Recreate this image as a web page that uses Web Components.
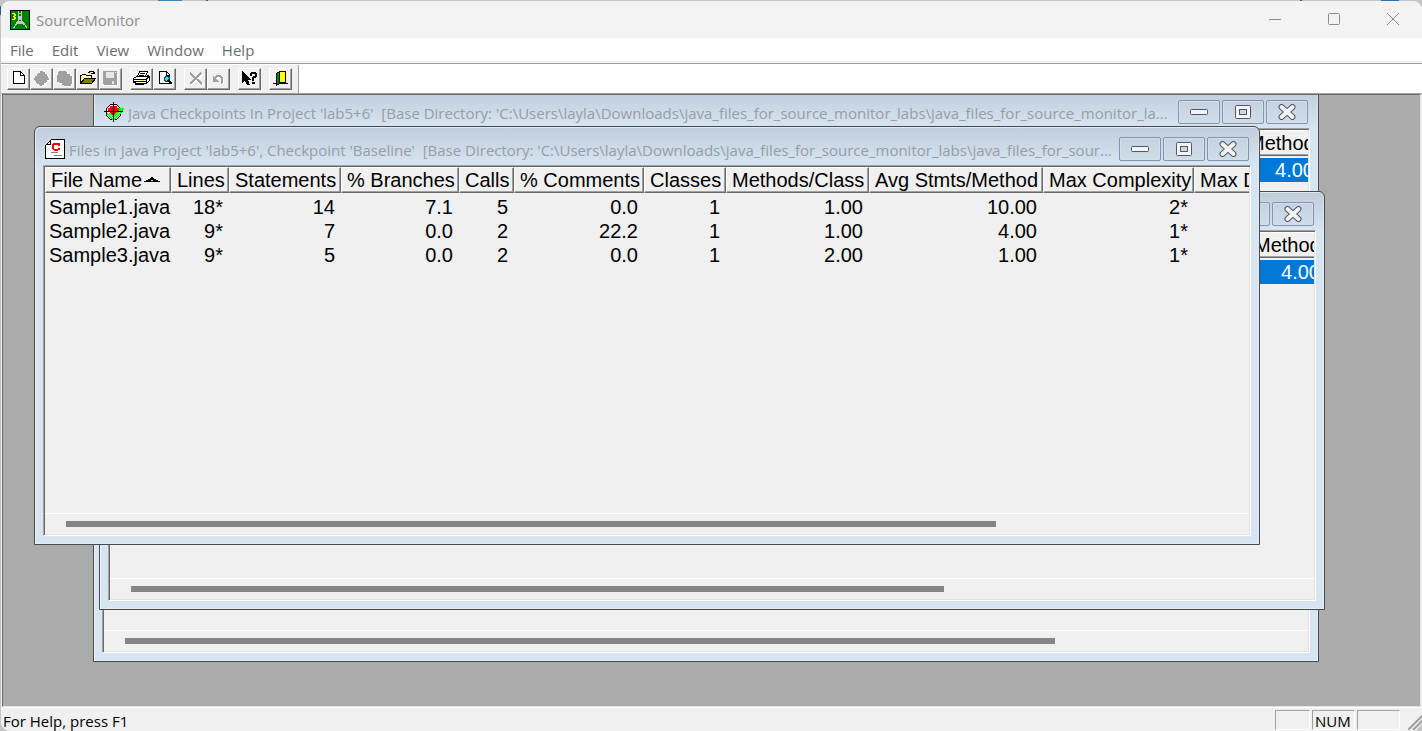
<!DOCTYPE html>
<html lang="en">
<head>
<meta charset="utf-8">
<title>SourceMonitor</title>
<style>
  body { margin: 0; font: 15px/20px "Open Sans", sans-serif; background: #c4c4c4; overflow: hidden; }
</style>
</head>
<body>
<sm-app>
  <sm-titlebar slot="title">SourceMonitor</sm-titlebar>
  <sm-menubar slot="menu"></sm-menubar>
  <sm-toolbar slot="tools"></sm-toolbar>
  <mdi-window class="project" icon="target" label="Java Checkpoints In Project 'lab5+6'&nbsp; [Base Directory: 'C:\Users\layla\Downloads\java_files_for_source_monitor_labs\java_files_for_source_monitor_la...">
    <metrics-table kind="summary"></metrics-table>
  </mdi-window>
  <mdi-window class="checkpoint" label="">
    <metrics-table kind="summary"></metrics-table>
  </mdi-window>
  <mdi-window class="files" icon="file" label="Files in Java Project 'lab5+6', Checkpoint 'Baseline'&nbsp; [Base Directory: 'C:\Users\layla\Downloads\java_files_for_source_monitor_labs\java_files_for_sour...">
    <metrics-table kind="files"></metrics-table>
  </mdi-window>
  <sm-statusbar slot="status">For Help, press F1</sm-statusbar>
</sm-app>

<script>
const shadow = (host, html) => { host.attachShadow({ mode: 'open' }).innerHTML = html; };

customElements.define('sm-app', class extends HTMLElement {
  constructor() {
    super();
    shadow(this, `
    <style>
      :host { display: block; height: 100vh; box-sizing: border-box; padding: 1px 0 0 1px;
        background:
          linear-gradient(#2f5d8f,#2f5d8f) 0 6px / 1px 9px no-repeat,
          linear-gradient(90deg,#0000 0 158px,#3f86b8 158px 182px,#0000 182px 206px,#555 206px 208px,#0000 208px 1300px,#555 1300px 1302px,#0000 1302px 1381px,#2f6ea5 1381px 1399px,#0000 1399px) 0 0 / 100% 1px no-repeat,
          #c4c4c4; }
      .app { height: 100%; display: flex; flex-direction: column; border-radius: 9px; overflow: hidden; background: #f0f0f0; }
      main { flex: 1; position: relative; overflow: hidden; margin: 0 1px; background: #ababab;
        border-top: 1px solid #696969; border-left: 1px solid #696969; border-right: 1px solid #e3e3e3; border-bottom: 1px solid #e3e3e3; }
      ::slotted(mdi-window) { position: absolute; }
      ::slotted(.project) { left: 90px; top: -6px; width: 1226px; height: 573px; }
      ::slotted(.checkpoint) { left: 96px; top: 96px; width: 1226px; height: 419px; }
      ::slotted(.files) { left: 31px; top: 31px; width: 1226px; height: 419px; }
    </style>
    <div class="app">
      <slot name="title"></slot><slot name="menu"></slot><slot name="tools"></slot>
      <main><slot></slot></main>
      <slot name="status"></slot>
    </div>`);
  }
});

customElements.define('sm-titlebar', class extends HTMLElement {
  constructor() {
    super();
    shadow(this, `
    <style>
      :host { display: flex; align-items: center; height: 37px; background: #f3f3f3; color: #8f8f8f; padding-left: 9px; }
      .logo { margin-right: 6px; }
      span { flex: 1; }
      button { width: 59px; height: 37px; border: 0; padding: 0; background: none; display: grid; place-items: center; }
      button svg { margin-bottom: 2px; }
    </style>
    <svg class="logo" width="20" height="20" viewBox="0 0 20 20" shape-rendering="crispEdges">
      <rect width="20" height="20" rx="1" fill="#000"/><rect x="1" y="1" width="18" height="18" fill="#008000"/>
      <path d="M8.500 1v5M11.500 1v5M8 3.500h4M8 9.500h4M6 13.500h9" stroke="#c0c0c0" fill="none"/>
      <path d="M9 5 L8 11 L3.500 18.500M11 5 L12 11 L17.500 18.500M9 6 L12 10M11 6L8 10M8 11l7 4M12 11l-7 4" stroke="#c8c8c8" fill="none"/>
      <path d="M2 3h3v1h1v2H5v1h1v2H5v1H2V9h2V7H3V6h1V4H2z" fill="#ff0"/>
    </svg>
    <span><slot></slot></span>
    <button aria-label="Minimize"><svg width="12" height="12"><path d="M0 6.500h12" stroke="#8a8a8a"/></svg></button>
    <button aria-label="Maximize"><svg width="12" height="12"><rect x=".5" y=".5" width="11" height="11" rx="1" fill="none" stroke="#8a8a8a"/></svg></button>
    <button aria-label="Close"><svg width="12" height="12"><path d="M0 0l12 12M12 0L0 12" stroke="#8a8a8a"/></svg></button>`);
  }
});

customElements.define('sm-menubar', class extends HTMLElement {
  constructor() {
    super();
    shadow(this, `
    <style>
      :host { display: block; background: #fff; border-bottom: 2px solid #f0f0f0; }
      nav { display: flex; height: 23px; }
      button { font: inherit; color: #6d6d6d; border: 0; background: none; padding: 0 9px; }
    </style>
    <nav>${['File', 'Edit', 'View', 'Window', 'Help'].map(t => `<button>${t}</button>`).join('')}</nav>`);
  }
});

const blobA = 'M9 2h3v1h2v2h2v2h1v2h1v2h-2v2h-1v1h-2v2h-2v1h-2v-1H8v-1H6v-1H5v-2H4v-1H3V9h1V7h2V5h1V4h2z';
const blobB = 'M5 2h7v1h1v2h3v2h2v8h-1v2h-7v-1H8v-2H5v-1H3V6h1V3h1z';
const icons = {
  'New': '<path d="M5.500 2.500h7l4 4v8h-11z" fill="#fff" stroke="#000"/><path d="M12.500 3v3.500H16" fill="none" stroke="#000"/>',
  'Checkpoint': `<path d="${blobA}" fill="#fff" transform="translate(1 1)"/><path d="${blobA}" fill="#a0a0a0"/>`,
  'Checkpoints': `<path d="${blobB}" fill="#fff" transform="translate(1 1)"/><path d="${blobB}" fill="#a0a0a0"/>`,
  'Open': '<path d="M3.500 14V6.500h1l1-1h3l1 1h5v3" fill="#ffff9c" stroke="#000"/><path d="M3.500 14.500l4-5h11l-4 5z" fill="#808000" stroke="#000"/><path d="M11 3.500h1l1-1h3l1 1v1M14 4.500h4" stroke="#000" fill="none"/>',
  'Save': '<path d="M4 3h14v14H5z" fill="#fff"/><path d="M3 2h14v14H4l-1-1z" fill="#a0a0a0"/><path d="M6 3h8v6H6zM12 12h2v3h-2z" fill="#e8e8e8"/><path d="M15 3h1v1h-1z" fill="#fff"/>',
  'Print': '<path d="M6.500 7.500l2-5h8l-2 5" fill="#fff" stroke="#000"/><path d="M9 4.500h5M8 6.500h5" stroke="#000"/><path d="M2.500 9.500l3-2h10l2-1 1 1v4l-3 3h-3v1h-8v-2h-2z" fill="#fff" stroke="#000"/><path d="M3 10.500h12M3 12.500h12M15.500 9v5M16 9.500l2-2M5 14.500h8" stroke="#000"/><path d="M10 11h3v1h-3z" fill="#ff0"/>',
  'Print preview': '<path d="M5.500 2.500h7l3 3v9h-10z" fill="#fff" stroke="#000"/><path d="M12.500 3v3H16" fill="none" stroke="#000"/><path d="M11 7h3v1h1v3h-1v1h-3v-1h-1V8h1z" fill="#0ff" stroke="#246"/><path d="M14 11l4 4" stroke="#000" stroke-width="2"/>',
  'Delete': '<path d="M6 5l12 11M18 5L6 16" stroke="#fff" stroke-width="2"/><path d="M5 4l12 11M16 4L5 15" stroke="#a0a0a0" stroke-width="2"/>',
  'Undo': '<path d="M8 10a4 4 0 1 1 6 5" stroke="#fff" fill="none" stroke-width="2"/><path d="M7 9a4 4 0 1 1 6 5" stroke="#a0a0a0" fill="none" stroke-width="2"/><path d="M5 7v6h6z" fill="#a0a0a0"/>',
  'Context help': '<path d="M3 2l8 8H8l2 5H8l-2-4-3 3z" fill="#000" stroke="#000"/><path d="M12 7V4.500l1-1h3l1 1V7l-3 2v3" fill="none" stroke="#000" stroke-width="2"/><path d="M13 13h3v2h-3z" fill="#000"/>',
  'Exit': '<path d="M3 14.500h15" stroke="#000"/><path d="M9.500 2.500h6v11h-6z" fill="#ff0" stroke="#000"/><path d="M6.500 4.500l3-2v12l-3 2z" fill="#008000" stroke="#000"/>'
};
const groups = [['New', 'Checkpoint', 'Checkpoints', 'Open', 'Save'], ['Print', 'Print preview'], ['Delete', 'Undo'], ['Context help'], ['Exit']];

customElements.define('sm-toolbar', class extends HTMLElement {
  constructor() {
    super();
    shadow(this, `
    <style>
      :host { display: block; background: #fff; border-top: 1px solid #a0a0a0; border-bottom: 1px solid #a0a0a0; }
      .bar { display: flex; gap: 8px; width: max-content; box-sizing: border-box; height: 28px; margin-top: 1px; padding: 3px 6px 0; background: #f0f0f0; border-right: 1px solid #a0a0a0; }
      .group { display: flex; }
      button { width: 23px; height: 22px; padding: 0; border: 1px solid; border-color: #fff #696969 #696969 #fff; box-shadow: inset -1px -1px #a0a0a0; background: #f0f0f0; }
      svg { display: block; }
    </style>
    <div class="bar" role="toolbar">${groups.map(g => `<div class="group">${g.map(n =>
      `<button aria-label="${n}"><svg width="21" height="20" viewBox="0 0 21 20" shape-rendering="crispEdges">${icons[n]}</svg></button>`).join('')}</div>`).join('')}</div>`);
  }
});

const glyphs = {
  target: '<path d="M6.500 2.500h6l4 4v7l-4 4h-6l-4-4v-7z" fill="#fff" stroke="#000"/><path d="M3 11l6 6 10-10v2l-8 9H8l-5-5z" fill="#0f0"/><path d="M6 4h7v2h2v4h-2v2h-2v2H8v-2H6v-2H4V6h2z" fill="#f00"/><path d="M4 11l5 5 6-6h-2l-4 3-3-2z" fill="#0f0"/><path d="M15 6h5l-4 5z" fill="#0f0"/><path d="M9.500 0v20M0 9.500h19" stroke="#000"/>',
  file: '<path d="M6.500 .5h13v19H.5v-13z" fill="#fff" stroke="#000" stroke-width="1"/><path d="M5.500 1v4.500H1" fill="none" stroke="#000"/><path d="M14 4v3M14 5.500l-2-1H9l-1 1v4l1 1h4l2-1" stroke="#f00" stroke-width="2" fill="none"/><path d="M6 13.500h7M9 16.500h8" stroke="#808080"/>'
};

customElements.define('mdi-window', class extends HTMLElement {
  connectedCallback() {
    const icon = glyphs[this.getAttribute('icon')] || '';
    shadow(this, `
    <style>
      :host { display: block; box-sizing: border-box; border: 1px solid #474b50; border-radius: 6px 6px 0 0; overflow: hidden;
        background: linear-gradient(#bfcddb, #d7e4f2 38px); box-shadow: inset 1px 1px #ffffff90, inset -1px -1px #ffffff50; }
      .frame { height: 100%; box-sizing: border-box; padding: 0 8px 8px; display: flex; flex-direction: column; }
      header { display: flex; gap: 2px; height: 38px; flex: none; align-items: flex-start; padding: 10px 2px 0; box-sizing: border-box; }
      .icon { margin: 2px 2px 0 0; flex: none; }
      h2 { flex: 1; min-width: 0; margin: 3px 0 0; font: inherit; color: #969da6; white-space: nowrap; overflow: hidden; }
      button { flex: none; width: 42px; height: 24px; padding: 0; border: 1px solid #8493ae; border-radius: 2px; background: linear-gradient(#c5d3e1, #cfdcea); box-shadow: inset 0 0 0 1px #d3dfeb; display: grid; place-items: center; }
      section { flex: 1; min-height: 0; display: flex; flex-direction: column; background: #f0f0f0; border: 1px solid; border-color: #a0a0a0 #fff #fff #a0a0a0; box-shadow: inset 1px 1px #696969, inset -1px -1px #e3e3e3; padding: 1px; }
      .view { flex: 1; min-height: 0; overflow: hidden; }
      .scroll { height: 20px; flex: none; border-top: 1px solid #fff; display: flex; align-items: center; padding: 0 21px; }
      .thumb { height: 6px; background: #858585; width: var(--thumb, 80%); }
      :host(.checkpoint) { --thumb: 70%; }
    </style>
    <div class="frame">
      <header>
        <svg class="icon" width="20" height="20" viewBox="0 0 20 20" shape-rendering="crispEdges">${icon}</svg>
        <h2>${this.getAttribute('label')}</h2>
        <button aria-label="Minimize"><svg width="18" height="6"><rect x=".5" y=".5" width="17" height="5" rx="1" fill="#f4f4f4" stroke="#535666"/></svg></button>
        <button aria-label="Maximize"><svg width="16" height="14"><rect x=".5" y=".5" width="15" height="13" rx="1" fill="#f4f4f4" stroke="#535666"/><rect x="4.500" y="4.500" width="7" height="5" fill="#c9d6e4" stroke="#535666"/></svg></button>
        <button aria-label="Close"><svg width="18" height="16"><path d="M3.500 3L14.500 13M14.500 3L3.500 13" stroke="#535666" stroke-width="6" stroke-linecap="round"/><path d="M3.500 3L14.500 13M14.500 3L3.500 13" stroke="#f4f4f4" stroke-width="4" stroke-linecap="round"/></svg></button>
      </header>
      <section>
        <div class="view"><slot></slot></div>
        <div class="scroll"><div class="thumb"></div></div>
      </section>
    </div>`);
  }
});

const tables = {
  files: {
    cols: [['File Name', 126], ['Lines', 58], ['Statements', 112], ['% Branches', 118], ['Calls', 55], ['% Comments', 130], ['Classes', 82], ['Methods/Class', 143], ['Avg Stmts/Method', 174], ['Max Complexity', 151], ['Max Depth', 112]],
    rows: [
      ['Sample1.java', '18*', '14', '7.1', '5', '0.0', '1', '1.00', '10.00', '2*', ''],
      ['Sample2.java', '9*', '7', '0.0', '2', '22.2', '1', '1.00', '4.00', '1*', ''],
      ['Sample3.java', '9*', '5', '0.0', '2', '0.0', '1', '2.00', '1.00', '1*', '']
    ]
  },
  summary: { cols: [['', 1138], ['Methods', 78]], rows: [['', '4.00']], selected: 0 }
};

customElements.define('metrics-table', class extends HTMLElement {
  connectedCallback() {
    const t = tables[this.getAttribute('kind')];
    const arrow = '<svg width="16" height="5" shape-rendering="crispEdges"><path d="M0 5V4h2V3h2V2h2V1h1V0h2v1h1v1h2v1h2v1h2v1z"/><path d="M7 3h2v1H7z" fill="#f0f0f0"/></svg>';
    shadow(this, `
    <style>
      :host { display: block; font: 20px/24px "Liberation Sans", Arial, sans-serif; color: #000; }
      table { table-layout: fixed; width: ${t.cols.reduce((s, c) => s + c[1], 0)}px; border-collapse: separate; border-spacing: 0; }
      th, td { padding: 0 6px 0 5px; text-align: right; white-space: nowrap; overflow: hidden; font-weight: normal; height: 24px; }
      th { text-align: left; padding: 1px 0 0 5px; height: 23px; line-height: 23px; border: 1px solid; border-color: #fff #696969 #696969 #fff; box-shadow: inset -1px -1px #a0a0a0; }
      td:first-child { text-align: left; padding: 0 0 0 4px; }
      tbody::before { content: ""; display: table-row; height: 2px; }
      .selected td { background: #0078d7; color: #fff; }
      svg { margin-left: 2px; vertical-align: 5px; }
    </style>
    <table>
      <colgroup>${t.cols.map(c => `<col style="width:${c[1]}px">`).join('')}</colgroup>
      <thead><tr>${t.cols.map((c, i) => `<th scope="col">${c[0]}${c[0] && i === 0 ? arrow : ''}</th>`).join('')}</tr></thead>
      <tbody>${t.rows.map((r, i) => `<tr class="${t.selected === i ? 'selected' : ''}">${r.map(v => `<td>${v}</td>`).join('')}</tr>`).join('')}</tbody>
    </table>`);
  }
});

customElements.define('sm-statusbar', class extends HTMLElement {
  constructor() {
    super();
    shadow(this, `
    <style>
      :host { display: flex; gap: 2px; height: 24px; box-sizing: border-box; flex: none; background: #f0f0f0; border-top: 1px solid #fff; padding: 2px 0 1px 2px; color: #000; }
      .message { flex: 1; padding-top: 1px; }
      .pane { box-sizing: border-box; width: 35px; border: 1px solid; border-color: #a0a0a0 #fff #fff #a0a0a0; line-height: 20px; padding-left: 2px; }
      .wide { width: 43px; }
      .grip { align-self: flex-end; margin-left: 6px; }
    </style>
    <div class="message"><slot></slot></div>
    <div class="pane"></div><div class="pane wide">NUM</div><div class="pane wide"></div>
    <svg class="grip" width="14" height="15"><path d="M0 15L15 0M5 15L15 5M10 15l5-5" stroke="#a0a0a0" stroke-width="2"/></svg>`);
  }
});
</script>
</body>
</html>
